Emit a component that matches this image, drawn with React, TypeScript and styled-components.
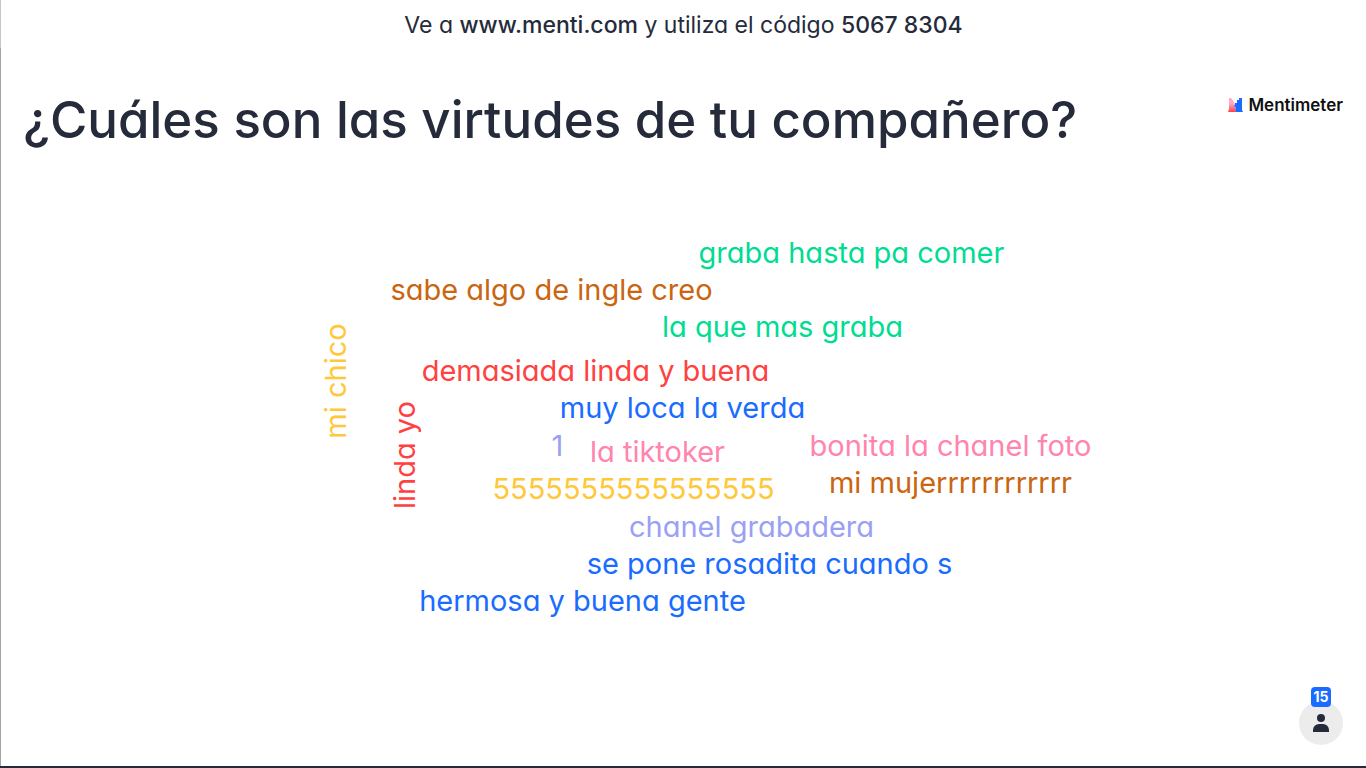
import React from 'react';
import styled, { createGlobalStyle } from 'styled-components';

const GlobalStyle = createGlobalStyle`
  * { box-sizing: border-box; }
  body {
    margin: 0;
    background: #ffffff;
    color: #252b3a;
    font-family: Inter, 'Liberation Sans', sans-serif;
    font-feature-settings: 'cv11';
  }
`;

const Page = styled.div`
  display: flex;
  flex-direction: column;
  min-height: 100vh;
  border-bottom: 2px solid #252b3a;
`;

const JoinBar = styled.header`
  display: flex;
  justify-content: center;
  padding: 9px 16px 7px;
  border-left: 1px solid #c6c6c6;
  font-size: 23px;
  line-height: 32px;
`;

const JoinText = styled.p`
  margin: 0;
  strong { font-weight: 500; }
`;

const Slide = styled.main`
  display: flex;
  flex: 1;
  flex-direction: column;
  border-left: 1px solid #a3a3a3;
`;

const TitleRow = styled.div`
  display: flex;
  align-items: flex-start;
  justify-content: space-between;
  padding: 40px 23px 0 22px;
`;

const Question = styled.h1`
  margin: 0;
  font-size: 51px;
  font-weight: 500;
  line-height: 64px;
`;

const Brand = styled.div`
  display: flex;
  align-items: center;
  gap: 5px;
  padding-top: 6px;
  color: #101010;
  font-size: 17px;
  font-weight: 600;
  line-height: 22px;
`;

const Cloud = styled.section`
  position: relative;
  flex: 1;
  min-height: 480px;
`;

const Word = styled.span<{ $x: number; $y: number; $color: string; $vertical?: boolean }>`
  position: absolute;
  left: calc(50% + ${p => p.$x}px);
  top: ${p => p.$y}px;
  transform: translate(-50%, -50%) ${p => (p.$vertical ? 'rotate(-90deg)' : '')};
  color: ${p => p.$color};
  font-size: 29px;
  line-height: 36px;
  white-space: nowrap;
`;

const Participants = styled.button`
  position: absolute;
  right: 23px;
  bottom: 21px;
  display: flex;
  align-items: center;
  justify-content: center;
  width: 44px;
  height: 44px;
  padding: 0;
  border: 0;
  border-radius: 50%;
  background: #ececec;
  color: #252b3a;
`;

const Count = styled.span`
  position: absolute;
  top: -14px;
  left: 12px;
  width: 20px;
  height: 20px;
  border-radius: 4px;
  background: #196cff;
  color: #ffffff;
  font-family: Inter, sans-serif;
  font-size: 14px;
  font-weight: 700;
  line-height: 20px;
  text-align: center;
`;

const GREEN = '#00dc91';
const BROWN = '#ca6510';
const YELLOW = '#ffc83a';
const RED = '#ff4141';
const BLUE = '#196cff';
const PINK = '#ff84ae';
const LILAC = '#9ba0f5';

const words = [
  { text: 'graba hasta pa comer', x: 168, y: 101, color: GREEN },
  { text: 'sabe algo de ingle creo', x: -132, y: 138, color: BROWN },
  { text: 'la que mas graba', x: 99, y: 175, color: GREEN },
  { text: 'mi chico', x: -348, y: 229, color: YELLOW, vertical: true },
  { text: 'demasiada linda y buena', x: -88, y: 219, color: RED },
  { text: 'muy loca la verda', x: -1, y: 256, color: BLUE },
  { text: 'linda yo', x: -279, y: 303, color: RED, vertical: true },
  { text: '1', x: -126, y: 294, color: LILAC },
  { text: 'la tiktoker', x: -26, y: 300, color: PINK },
  { text: 'bonita la chanel foto', x: 267, y: 294, color: PINK },
  { text: '5555555555555555', x: -50, y: 337, color: YELLOW },
  { text: 'mi mujerrrrrrrrrrrr', x: 267, y: 331, color: BROWN },
  { text: 'chanel grabadera', x: 68, y: 375, color: LILAC },
  { text: 'se pone rosadita cuando s', x: 86, y: 412, color: BLUE },
  { text: 'hermosa y buena gente', x: -101, y: 449, color: BLUE },
];

export default function App() {
  return (
    <>
      <GlobalStyle />
      <Page>
        <JoinBar>
          <JoinText>
            Ve a <strong>www.menti.com</strong> y utiliza el código <strong>5067 8304</strong>
          </JoinText>
        </JoinBar>
        <Slide>
          <TitleRow>
            <Question>¿Cuáles son las virtudes de tu compañero?</Question>
            <Brand>
              <svg width="15" height="14" viewBox="0 0 15 14" aria-hidden="true">
                <defs>
                  <linearGradient id="brandPink" x1="0" y1="0" x2="0" y2="1">
                    <stop offset="0.4" stopColor="#ffa9c6" />
                    <stop offset="1" stopColor="#ff3f45" />
                  </linearGradient>
                </defs>
                <path d="M1 0h2l3 4 3 10H0l1-3z" fill="url(#brandPink)" />
                <path d="M14 0h-3v2H9v3H7v2H6l2 3v4h7l-1-2z" fill="#196cff" />
                <path d="M6 7l2 3v4z" fill="#6d8dff" />
              </svg>
              Mentimeter
            </Brand>
          </TitleRow>
          <Cloud>
            {words.map(w => (
              <Word key={w.text} $x={w.x} $y={w.y} $color={w.color} $vertical={w.vertical}>
                {w.text}
              </Word>
            ))}
            <Participants aria-label="15 participantes">
              <svg width="16" height="18" viewBox="0 0 16 18" aria-hidden="true">
                <circle cx="8" cy="4" r="4" fill="currentColor" />
                <path d="M0 18v-2a6 6 0 0 1 6-6h4a6 6 0 0 1 6 6v2z" fill="currentColor" />
              </svg>
              <Count>15</Count>
            </Participants>
          </Cloud>
        </Slide>
      </Page>
    </>
  );
}
